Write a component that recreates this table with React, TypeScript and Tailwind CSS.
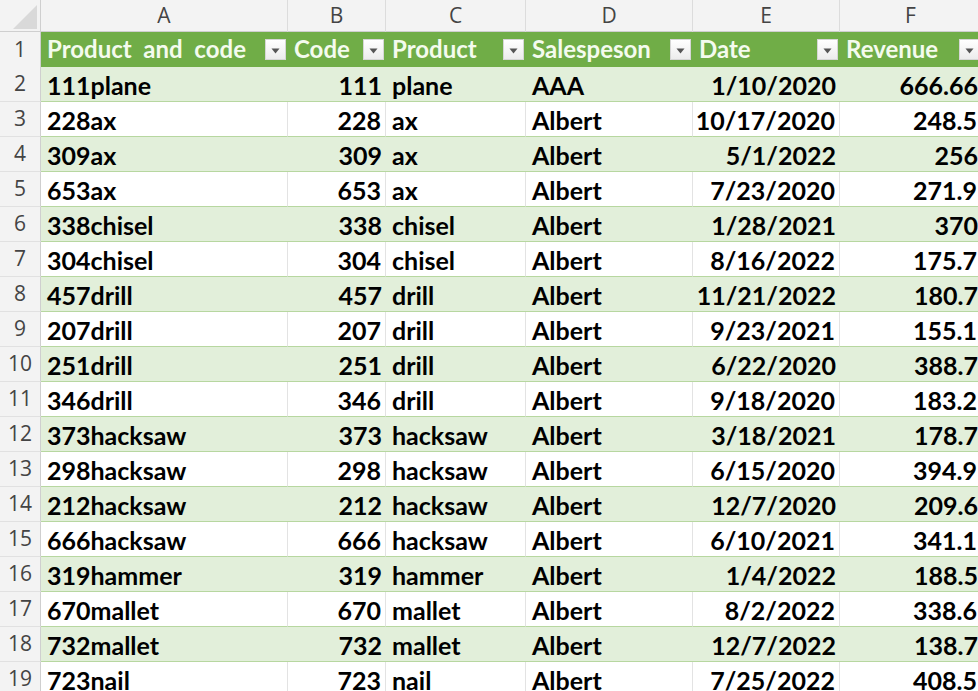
import React from 'react';

const cols = [
  { key: 'A', title: 'Product  and  code', align: 'left' },
  { key: 'B', title: 'Code', align: 'right' },
  { key: 'C', title: 'Product', align: 'left' },
  { key: 'D', title: 'Salespeson', align: 'left' },
  { key: 'E', title: 'Date', align: 'right' },
  { key: 'F', title: 'Revenue', align: 'right' },
];

const rows: string[][] = [
  ['111plane', '111', 'plane', 'AAA', '1/10/2020', '666.66'],
  ['228ax', '228', 'ax', 'Albert', '10/17/2020', '248.5'],
  ['309ax', '309', 'ax', 'Albert', '5/1/2022', '256'],
  ['653ax', '653', 'ax', 'Albert', '7/23/2020', '271.9'],
  ['338chisel', '338', 'chisel', 'Albert', '1/28/2021', '370'],
  ['304chisel', '304', 'chisel', 'Albert', '8/16/2022', '175.7'],
  ['457drill', '457', 'drill', 'Albert', '11/21/2022', '180.7'],
  ['207drill', '207', 'drill', 'Albert', '9/23/2021', '155.1'],
  ['251drill', '251', 'drill', 'Albert', '6/22/2020', '388.7'],
  ['346drill', '346', 'drill', 'Albert', '9/18/2020', '183.2'],
  ['373hacksaw', '373', 'hacksaw', 'Albert', '3/18/2021', '178.7'],
  ['298hacksaw', '298', 'hacksaw', 'Albert', '6/15/2020', '394.9'],
  ['212hacksaw', '212', 'hacksaw', 'Albert', '12/7/2020', '209.6'],
  ['666hacksaw', '666', 'hacksaw', 'Albert', '6/10/2021', '341.1'],
  ['319hammer', '319', 'hammer', 'Albert', '1/4/2022', '188.5'],
  ['670mallet', '670', 'mallet', 'Albert', '8/2/2022', '338.6'],
  ['732mallet', '732', 'mallet', 'Albert', '12/7/2022', '138.7'],
  ['723nail', '723', 'nail', 'Albert', '7/25/2022', '408.5'],
];

const FilterButton = () => (
  <div className="w-[21px] h-[21px] shrink-0 bg-gradient-to-b from-white to-[#ececec] border border-[#d6d6d6] flex items-center justify-center">
    <svg width="9" height="6" viewBox="0 0 9 6" className="mt-[3px]">
      <path d="M0.5 0.5 L8.5 0.5 L4.5 5.5 Z" fill="#555" />
    </svg>
  </div>
);

const App: React.FC = () => {
  const gridCols = 'grid grid-cols-[41px_247px_98px_140px_167px_147px_142px]';
  return (
    <div className="w-[978px] h-[691px] overflow-hidden bg-white font-['Lato','Noto_Sans',sans-serif]">
      <div className="w-[990px]">
        {/* Column letters */}
        <div className={`${gridCols} h-[32px] bg-[#f3f3f3] border-b border-[#cfcfcf]`}>
          <div className="relative border-r border-[#cfcfcf]">
            <div className="absolute right-[3px] bottom-[3px] w-0 h-0 border-l-[24px] border-l-transparent border-b-[24px] border-b-[#d9d9d9]" />
          </div>
          {cols.map((c) => (
            <div
              key={c.key}
              className="flex items-center justify-center border-r border-[#dcdcdc] text-[21px] text-[#444] font-['Open_Sans',sans-serif] font-normal"
            >
              {c.key}
            </div>
          ))}
        </div>

        {/* Table header */}
        <div className={`${gridCols} h-[35px]`}>
          <div className="flex items-center justify-center bg-[#f3f3f3] border-r border-[#cfcfcf] text-[21px] text-[#444] font-['Open_Sans',sans-serif]">
            1
          </div>
          {cols.map((c) => (
            <div
              key={c.key}
              className="bg-[#70ad47] flex items-center justify-between pl-[6px] pr-[2px] border-b border-[#70ad47]"
            >
              <span className="text-[24px] font-bold text-[#f4fbee] whitespace-pre leading-none">{c.title}</span>
              <FilterButton />
            </div>
          ))}
        </div>

        {/* Body rows */}
        {rows.map((r, i) => {
          const band = i % 2 === 0;
          return (
            <div key={i} className={`${gridCols} h-[35px]`}>
              <div className="flex items-center justify-center bg-[#f3f3f3] border-r border-b border-r-[#cfcfcf] border-b-[#e1e1e1] text-[21px] text-[#444] font-['Open_Sans',sans-serif]">
                {i + 2}
              </div>
              {cols.map((c, j) => (
                <div
                  key={c.key}
                  className={`flex items-center pl-[6px] pr-[4px] pt-[2px] border-b border-b-[#b7d7a0] text-[25px] font-bold text-black leading-none ${
                    c.align === 'right' ? 'justify-end' : 'justify-start'
                  } ${band ? 'bg-[#e2efda]' : 'bg-white border-r border-r-[#e3e3e3]'}`}
                >
                  {r[j]}
                </div>
              ))}
            </div>
          );
        })}
      </div>
    </div>
  );
};

export default App;
